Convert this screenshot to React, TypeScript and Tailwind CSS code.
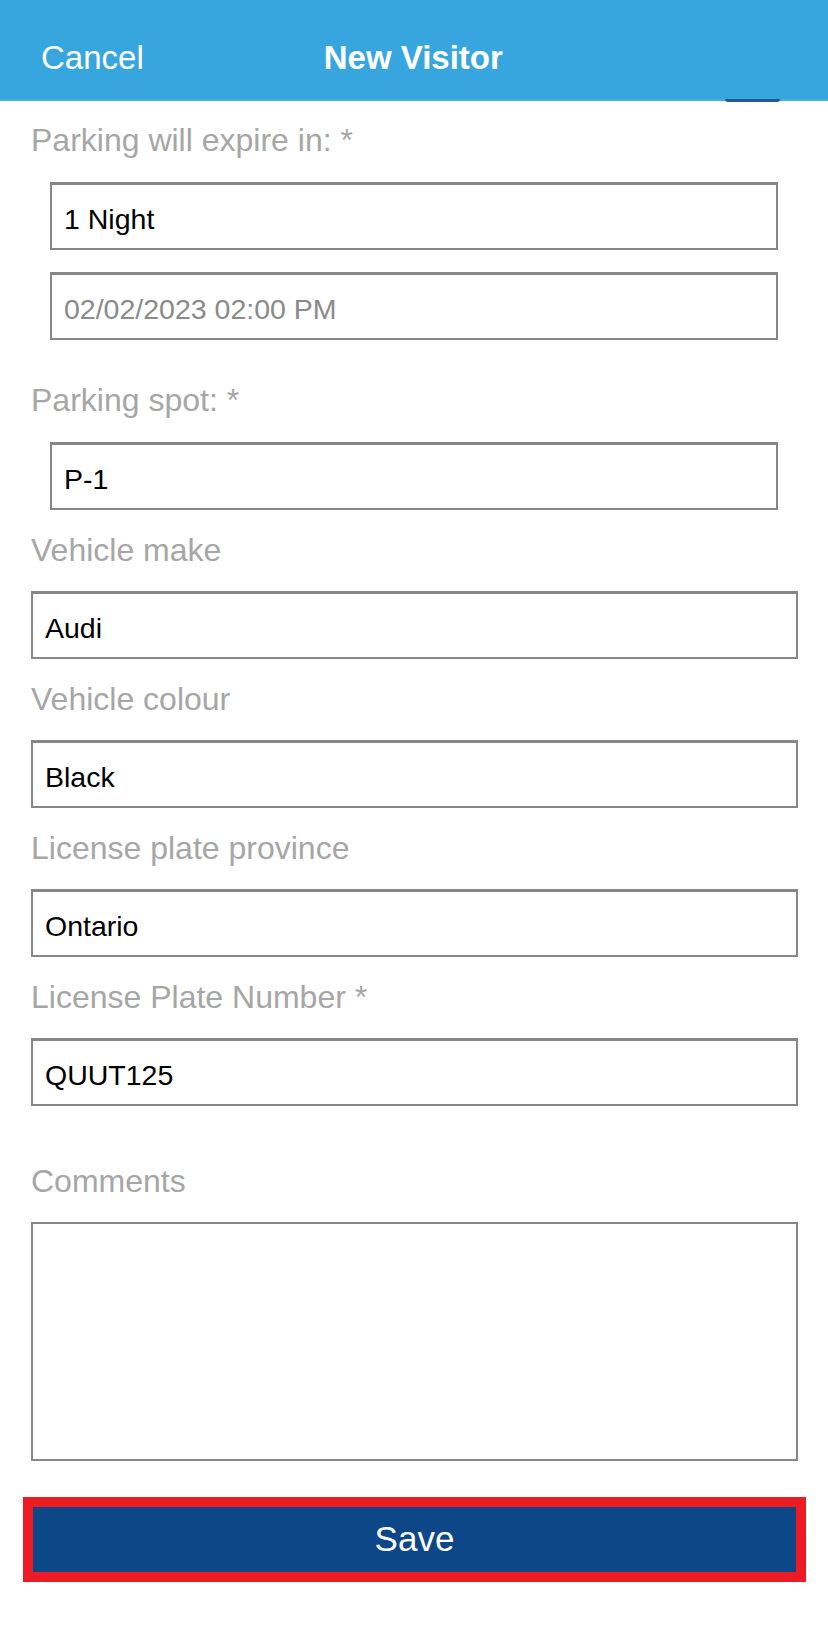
import React from 'react'

const font = { fontFamily: '"Liberation Sans", Arial, sans-serif' }

interface FieldProps {
  label: string
  value: string
  indent?: boolean
  muted?: boolean
}

const Label: React.FC<{ text: string; className?: string }> = ({ text, className = '' }) => (
  <div className={`pl-[31px] h-[40px] leading-[40px] text-[32px] text-[#a6a6a6] ${className}`}>{text}</div>
)

const Box: React.FC<{ value: string; indent?: boolean; muted?: boolean; className?: string }> = ({
  value,
  indent,
  muted,
  className = '',
}) => (
  <div className={`${indent ? 'ml-[50px] w-[728px]' : 'ml-[31px] w-[767px]'} ${className}`}>
    <div
      className={`h-[68px] border-2 border-t-[3px] border-[#878787] bg-white flex items-center pt-[5px] px-[12px] text-[28.5px] ${
        muted ? 'text-[#8a8a8a]' : 'text-black'
      }`}
    >
      {value}
    </div>
  </div>
)

const Field: React.FC<FieldProps> = ({ label, value, indent, muted }) => (
  <>
    <Label text={label} className="mt-[20px]" />
    <Box value={value} indent={indent} muted={muted} className="mt-[21px]" />
  </>
)

export default function App() {
  return (
    <div className="w-[828px] h-[1630px] bg-white overflow-hidden" style={font}>
      {/* header */}
      <div className="relative h-[101px] bg-[#37a6de] border-b-2 border-[#45b0e4] flex items-center pt-[16px] text-white text-[33px]">
        <span className="ml-[41px]">Cancel</span>
        <span className="ml-[180px] font-bold">New Visitor</span>
        <div className="absolute left-[725px] bottom-[-3px] w-[55px] h-[3px] rounded-b-full bg-[#1f5a8f]" />
      </div>

      <Label text="Parking will expire in: *" className="mt-[19px]" />
      <Box value="1 Night" indent className="mt-[22px]" />
      <Box value="02/02/2023 02:00 PM" indent muted className="mt-[22px]" />

      <Label text="Parking spot: *" className="mt-[40px]" />
      <Box value="P-1" indent className="mt-[22px]" />

      <Field label="Vehicle make" value="Audi" />
      <Field label="Vehicle colour" value="Black" />
      <Field label="License plate province" value="Ontario" />
      <Field label="License Plate Number *" value="QUUT125" />

      <Label text="Comments" className="mt-[55px]" />
      <div className="ml-[31px] mt-[21px] w-[767px] h-[239px] border-2 border-[#878787]" />

      <div className="ml-[23px] mt-[36px] w-[783px] h-[85px] border-[10px] border-[#ed1c24]">
        <div className="h-full bg-[#0d4787] flex items-center justify-center text-white text-[35px]">Save</div>
      </div>
    </div>
  )
}
